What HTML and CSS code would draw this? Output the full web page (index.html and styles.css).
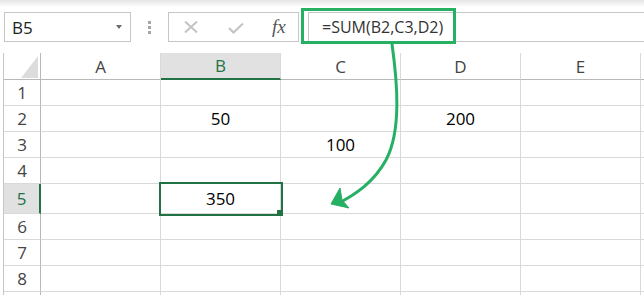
FILE: index.html
```html
<!DOCTYPE html>
<html lang="en">
<head>
    <meta charset="UTF-8">
    <title>SUM of cells</title>
    <link rel="stylesheet" href="styles.css">
</head>
<body>
    <div class="toolbar">
        <div class="name-box">
            <span>B5</span>
            <span class="caret"></span>
        </div>
        <div class="grip"><i></i><i></i><i></i></div>
        <div class="fx-buttons">
            <svg class="icon-cancel" width="14" height="12" viewBox="0 0 14 12">
                <path d="M1 0.5 L13 11.5 M13 0.5 L1 11.5" />
            </svg>
            <svg class="icon-enter" width="16" height="11" viewBox="0 0 16 11">
                <path d="M1 5 L5.5 9.5 L15 0.5" />
            </svg>
            <span class="fx">fx</span>
        </div>
        <div class="formula">=SUM(B2,C3,D2)</div>
    </div>

    <div class="grid">
        <div class="row head">
            <div class="hd corner"><div class="tri"></div></div>
            <div class="hd col">A</div>
            <div class="hd col on">B</div>
            <div class="hd col">C</div>
            <div class="hd col">D</div>
            <div class="hd col">E</div>
            <div class="hd col rest"></div>
        </div>
        <div class="row">
            <div class="hd">1</div>
            <div class="c"></div><div class="c"></div><div class="c"></div><div class="c"></div><div class="c"></div><div class="c rest"></div>
        </div>
        <div class="row">
            <div class="hd">2</div>
            <div class="c"></div><div class="c">50</div><div class="c"></div><div class="c">200</div><div class="c"></div><div class="c rest"></div>
        </div>
        <div class="row">
            <div class="hd">3</div>
            <div class="c"></div><div class="c"></div><div class="c">100</div><div class="c"></div><div class="c"></div><div class="c rest"></div>
        </div>
        <div class="row">
            <div class="hd">4</div>
            <div class="c"></div><div class="c"></div><div class="c"></div><div class="c"></div><div class="c"></div><div class="c rest"></div>
        </div>
        <div class="row tall">
            <div class="hd on">5</div>
            <div class="c"></div><div class="c sel">350</div><div class="c"></div><div class="c"></div><div class="c"></div><div class="c rest"></div>
        </div>
        <div class="row">
            <div class="hd">6</div>
            <div class="c"></div><div class="c"></div><div class="c"></div><div class="c"></div><div class="c"></div><div class="c rest"></div>
        </div>
        <div class="row">
            <div class="hd">7</div>
            <div class="c"></div><div class="c"></div><div class="c"></div><div class="c"></div><div class="c"></div><div class="c rest"></div>
        </div>
        <div class="row">
            <div class="hd">8</div>
            <div class="c"></div><div class="c"></div><div class="c"></div><div class="c"></div><div class="c"></div><div class="c rest"></div>
        </div>
        <div class="row last">
            <div class="hd"></div>
            <div class="c"></div><div class="c"></div><div class="c"></div><div class="c"></div><div class="c"></div><div class="c rest"></div>
        </div>
    </div>

    <!-- annotation: highlight round the formula and arrow to the result -->
    <svg class="callout" width="644" height="295" viewBox="0 0 644 295">
        <rect x="302.5" y="9.5" width="152" height="33" />
        <path class="curve" d="M392 44 C397 80, 402 130, 386 160 C374 182, 356 194, 339 203" />
        <polygon points="331,204 340,188 342,200 349,208" />
    </svg>
</body>
</html>
```

FILE: styles.css
```css
:root {
    --excel-green: #217346;
    --mark-green: #25b064;
    --grid-line: #d9d9d9;
    --head-line: #b8b8b8;
    --box-line: #c6c6c6;
    --head-text: #444444;
}

* {
    margin: 0;
    padding: 0;
    box-sizing: border-box;
}

body {
    position: relative;
    width: 644px;
    height: 295px;
    overflow: hidden;
    background: #ffffff;
    font-family: 'Open Sans', 'Noto Sans', sans-serif;
    color: #000000;
}

/* formula bar */

.toolbar {
    display: flex;
    height: 42px;
    padding: 12px 0 0 4px;
    background: linear-gradient(#e4e4e4, #ffffff 7px);
}

.name-box {
    width: 127px;
    height: 30px;
    border: 1px solid var(--box-line);
    background: #ffffff;
    display: flex;
    align-items: center;
    justify-content: space-between;
    padding: 0 8px 0 7px;
    font-size: 17px;
    color: #222222;
}

.caret {
    width: 0;
    height: 0;
    border-left: 3.5px solid transparent;
    border-right: 3.5px solid transparent;
    border-top: 4px solid #6b6b6b;
}

.grip {
    width: 37px;
    height: 30px;
    display: flex;
    flex-direction: column;
    align-items: center;
    justify-content: center;
    gap: 2px;
}

.grip i {
    display: block;
    width: 3px;
    height: 3px;
    background: #a6a6a6;
}

.fx-buttons {
    width: 131px;
    height: 30px;
    border: 1px solid var(--box-line);
    display: flex;
    align-items: center;
    padding-left: 15px;
}

.fx-buttons svg path {
    fill: none;
    stroke: #c3c3c3;
    stroke-width: 2;
}

.icon-enter {
    margin-left: 30px;
    margin-top: 3px;
}

.fx {
    margin-left: 28px;
    font-family: 'Liberation Serif', serif;
    font-style: italic;
    font-size: 19px;
    color: #555555;
}

.formula {
    flex: 1;
    height: 30px;
    margin-left: 9px;
    border: 1px solid var(--box-line);
    border-right: none;
    display: flex;
    align-items: center;
    padding-left: 13px;
    font-size: 16px;
    color: #333333;
}

/* sheet grid */

.grid {
    margin: 11px 0 0 3px;
    border-left: 1px solid var(--box-line);
}

.row {
    display: flex;
    height: 26px;
}

.row.head {
    height: 27px;
}

.row.tall {
    height: 30px;
}

.row.last {
    height: 10px;
}

.hd,
.c {
    flex: 0 0 120px;
    display: flex;
    align-items: center;
    justify-content: center;
    border-right: 1px solid var(--grid-line);
    border-bottom: 1px solid var(--grid-line);
    font-size: 17px;
}

.hd {
    flex-basis: 37px;
    color: var(--head-text);
    border-right-color: var(--head-line);
}

.hd.col {
    flex-basis: 120px;
    border-right-color: var(--grid-line);
    border-bottom-color: var(--head-line);
}

.hd.corner {
    justify-content: flex-end;
    align-items: flex-end;
    padding: 0 2px 1px 0;
    border-bottom-color: var(--head-line);
}

.tri {
    width: 17px;
    height: 22px;
    background: #dcdcdc;
    clip-path: polygon(100% 0, 100% 100%, 0 100%);
}

.hd.on {
    background: #e1e1e1;
    color: var(--excel-green);
    border-right: 2px solid var(--excel-green);
}

.hd.col.on {
    border-right: 1px solid var(--grid-line);
    border-bottom: 2px solid var(--excel-green);
}

.rest {
    flex: 1 1 auto;
    border-right: none;
}

.c.sel {
    position: relative;
    z-index: 1;
    outline: 2px solid var(--excel-green);
}

.c.sel::after {
    content: '';
    position: absolute;
    right: -3px;
    bottom: -3px;
    width: 6px;
    height: 6px;
    background: var(--excel-green);
}

/* annotation overlay */

.callout {
    position: absolute;
    top: 0;
    left: 0;
    z-index: 2;
    pointer-events: none;
}

.callout rect,
.callout .curve {
    fill: none;
    stroke: var(--mark-green);
    stroke-width: 3;
    stroke-linecap: round;
}

.callout polygon {
    fill: var(--mark-green);
    stroke: var(--mark-green);
    stroke-width: 1;
    stroke-linejoin: round;
}
```
